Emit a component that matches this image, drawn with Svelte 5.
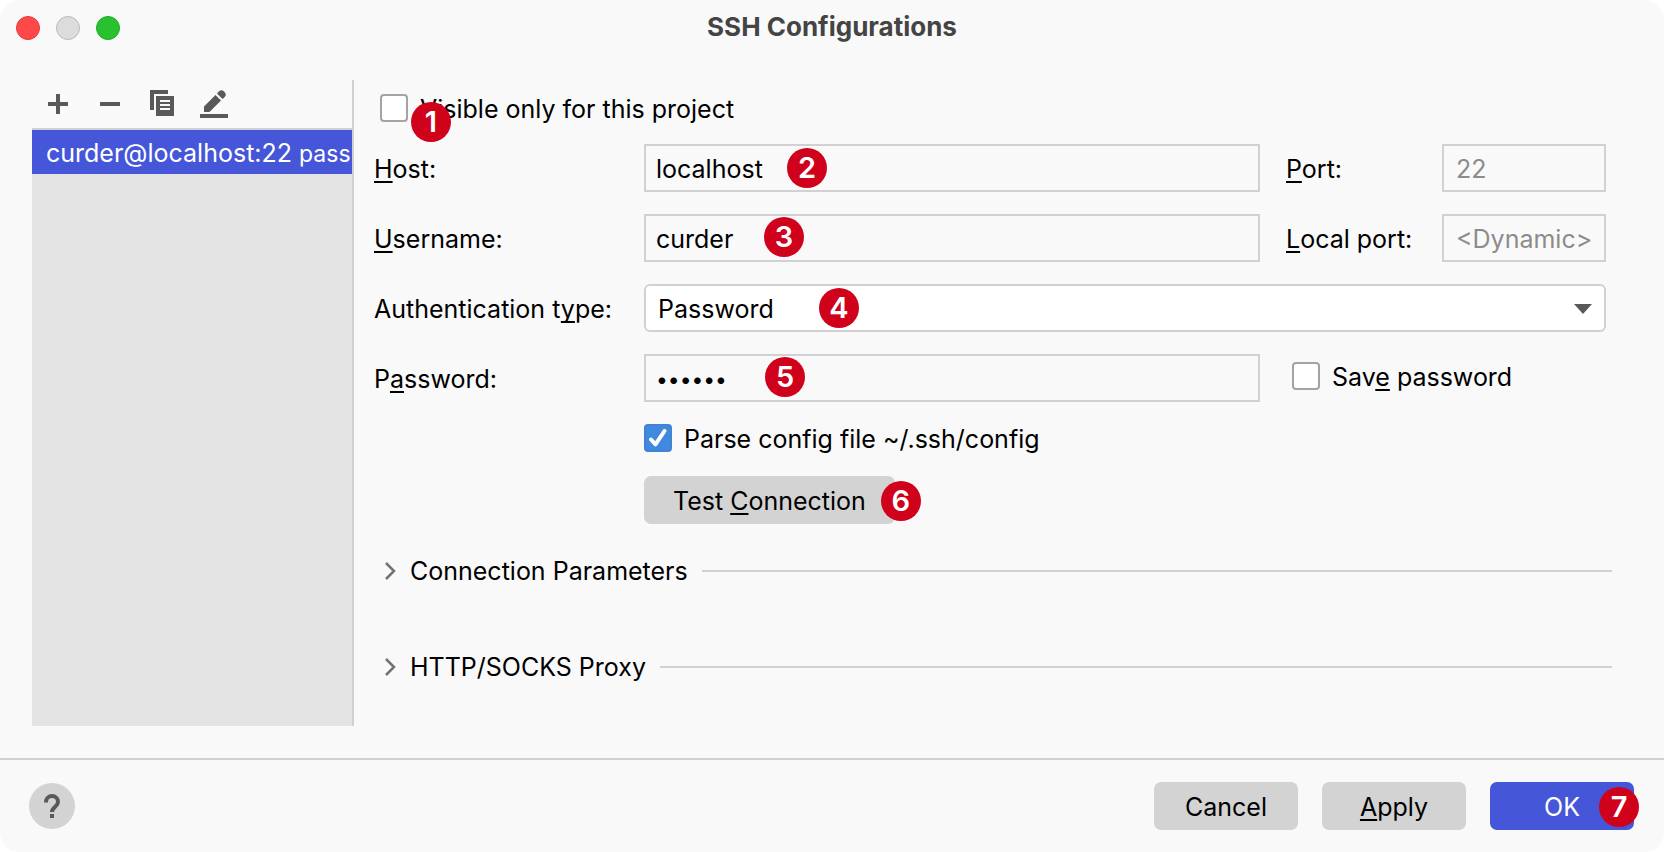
<script>
  let visibleOnly = $state(false);
  let savePassword = $state(false);
  let parseConfig = $state(true);
  let host = $state('localhost');
  let username = $state('curder');
  let password = $state('secret');
  let auth = $state('Password');
</script>

<main class="window">
  <header class="titlebar">
    <div class="lights">
      <button class="light red" aria-label="Close"></button>
      <button class="light grey" aria-label="Minimize"></button>
      <button class="light green" aria-label="Zoom"></button>
    </div>
    <h1>SSH Configurations</h1>
  </header>

  <div class="content">
    <aside>
      <div class="toolbar">
        <button aria-label="Add">
          <svg width="28" height="28" viewBox="0 0 28 28"><path d="M12 4h4v8h8v4h-8v8h-4v-8H4v-4h8z" /></svg>
        </button>
        <button aria-label="Remove">
          <svg width="28" height="28" viewBox="0 0 28 28"><path d="M4 12h20v4H4z" /></svg>
        </button>
        <button aria-label="Copy">
          <svg width="28" height="28" viewBox="0 0 28 28">
            <path d="M2 0h18v4H6v16H2z" />
            <path fill-rule="evenodd" d="M8 6h18v20H8zM12 10v2h10v-2zM12 14v2h10v-2zM12 18v2h10v-2z" />
          </svg>
        </button>
        <button aria-label="Edit">
          <svg width="28" height="28" viewBox="0 0 28 28">
            <path d="M0 24h28v4H0z" />
            <path d="M4 16.500L15.500 5 21 10.500 9.500 22H4zM17 3.500L19 1.300Q21.500-1 23.800 1.300L24.700 2.200Q27 4.500 24.700 7L22.500 9z" />
          </svg>
        </button>
      </div>
      <ul>
        <li>curder@localhost:22 <small>pass</small></li>
      </ul>
    </aside>

    <section class="panel">
      <div class="form">
        <div class="check first">
          <input id="visible" type="checkbox" bind:checked={visibleOnly} />
          <label for="visible">Visible only for this project</label>
          <span class="badge b1">1</span>
        </div>

        <label for="host"><u>H</u>ost:</label>
        <div class="field">
          <input id="host" type="text" bind:value={host} />
          <span class="badge b2">2</span>
        </div>
        <label class="side" for="port"><u>P</u>ort:</label>
        <input id="port" class="short" type="text" placeholder="22" />

        <label for="user"><u>U</u>sername:</label>
        <div class="field">
          <input id="user" type="text" bind:value={username} />
          <span class="badge b3">3</span>
        </div>
        <label class="side" for="local"><u>L</u>ocal port:</label>
        <input id="local" class="short" type="text" placeholder="&lt;Dynamic&gt;" />

        <label for="auth">Authentication t<u>y</u>pe:</label>
        <div class="field wide">
          <select id="auth" bind:value={auth}>
            <option>Password</option>
          </select>
          <svg class="arrow" width="18" height="10" viewBox="0 0 18 10"><path d="M0 0h18L9 10z" /></svg>
          <span class="badge b4">4</span>
        </div>

        <label for="pass">P<u>a</u>ssword:</label>
        <div class="field">
          <input id="pass" type="password" bind:value={password} />
          <span class="badge b5">5</span>
        </div>
        <div class="check save">
          <input id="save" type="checkbox" bind:checked={savePassword} />
          <label for="save">Sav<u>e</u> password</label>
        </div>

        <div class="extra">
          <div class="check">
            <input id="parse" type="checkbox" bind:checked={parseConfig} />
            <label for="parse">Parse config file ~/.ssh/config</label>
          </div>
          <button class="btn test">Test <u>C</u>onnection<span class="badge b6">6</span></button>
        </div>
      </div>

      <div class="groups">
        {#each ['Connection Parameters', 'HTTP/SOCKS Proxy'] as name}
          <button class="group" aria-expanded="false">
            <svg width="12" height="20" viewBox="0 0 12 20"><path d="M2 2l8 8-8 8" /></svg>
            <span>{name}</span>
          </button>
        {/each}
      </div>
    </section>
  </div>

  <footer>
    <button class="help" aria-label="Help">
      <svg width="46" height="46" viewBox="0 0 46 46">
        <path class="hook" d="M17 19.500V19a6 6 0 0 1 12 0c0 4.500-6 5-6 10" />
        <path class="dot" d="M21 31h4v4h-4z" />
      </svg>
    </button>
    <div class="actions">
      <button class="btn">Cancel</button>
      <button class="btn"><u>A</u>pply</button>
      <button class="btn primary">OK<span class="badge b7">7</span></button>
    </div>
  </footer>
</main>

<style>
  :global(body) {
    background: #fff;
  }

  * {
    box-sizing: border-box;
  }

  .window {
    display: flex;
    flex-direction: column;
    min-height: 100vh;
    overflow: hidden;
    border-radius: 20px;
    background: #f9f9f9;
    color: #000;
    font-family: Inter, 'Liberation Sans', sans-serif;
    font-size: 25px;
    line-height: 28px;
  }

  button,
  input,
  select {
    margin: 0;
    padding: 0;
    border: 0;
    background: none;
    color: inherit;
    font: inherit;
  }

  svg {
    display: block;
  }

  u {
    text-decoration-thickness: 2px;
    text-underline-offset: 3px;
    text-decoration-skip-ink: none;
  }

  label {
    padding-top: 2px;
  }

  .titlebar {
    display: grid;
    grid-template-columns: 1fr auto 1fr;
    align-items: center;
    height: 56px;
    padding: 0 16px;
  }

  .lights {
    display: flex;
    gap: 16px;
  }

  .light {
    width: 24px;
    height: 24px;
    border: 1px solid;
    border-radius: 50%;
  }

  .red {
    border-color: #e5383b;
    background: #ff4848;
  }

  .grey {
    border-color: #b9b9b9;
    background: #dcdcdc;
  }

  .green {
    border-color: #1faa27;
    background: #28c231;
  }

  h1 {
    margin: 0;
    padding-bottom: 2px;
    color: #444;
    font-size: 26px;
    font-weight: 700;
  }

  .content {
    display: flex;
    flex: 1;
    padding: 24px 52px 32px 32px;
  }

  aside {
    display: flex;
    flex: 0 0 322px;
    flex-direction: column;
    min-width: 0;
    border-right: 2px solid #d1d1d1;
  }

  .toolbar {
    display: flex;
    gap: 24px;
    height: 50px;
    padding: 10px 12px;
    border-bottom: 2px solid #d1d1d1;
  }

  .toolbar button {
    height: 28px;
    fill: #595959;
  }

  ul {
    flex: 1;
    margin: 0;
    padding: 0;
    background: #e4e4e4;
    list-style: none;
  }

  li {
    height: 44px;
    padding: 2px 0 0 14px;
    overflow: hidden;
    background: #4556d9;
    color: #fff;
    line-height: 42px;
    white-space: nowrap;
  }

  small {
    font-size: 23px;
  }

  .panel {
    flex: 1;
    min-width: 0;
    padding: 14px 0 0 20px;
  }

  .form {
    display: grid;
    grid-template-columns: 270px 1fr 182px 164px;
    row-gap: 22px;
    align-items: center;
    margin-right: 6px;
  }

  .side {
    padding-left: 26px;
  }

  .check {
    position: relative;
    display: flex;
    gap: 12px;
    align-items: center;
    height: 32px;
    padding-bottom: 4px;
  }

  .first {
    grid-column: 1 / -1;
    margin-bottom: -4px;
    padding-left: 6px;
  }

  .save {
    grid-column: 3 / -1;
    padding-left: 32px;
  }

  input[type='checkbox'] {
    flex: none;
    width: 28px;
    height: 28px;
    border: 2px solid #a3a3a3;
    border-radius: 4px;
    background: #fff;
    appearance: none;
  }

  input[type='checkbox']:checked {
    border-color: #3f84d2;
    background: #3f89de url("data:image/svg+xml,%3Csvg xmlns='http://www.w3.org/2000/svg' viewBox='0 0 24 24'%3E%3Cpath d='M5 13.500l4.500 4.800L18.500 5' fill='none' stroke='%23fff' stroke-width='4' stroke-linecap='round' stroke-linejoin='round'/%3E%3C/svg%3E") center / 24px 24px no-repeat;
  }

  .field {
    position: relative;
  }

  .field input,
  .short,
  select {
    display: block;
    width: 100%;
    height: 48px;
    padding: 2px 10px 0;
    border: 2px solid #d1d1d1;
  }

  .field input[type='password'] {
    font-size: 21px;
  }

  .short {
    padding: 2px 12px 0;
  }

  .short::placeholder {
    color: #8c8c8c;
    opacity: 1;
  }

  .wide {
    grid-column: 2 / -1;
  }

  select {
    padding: 2px 12px 0;
    border-radius: 6px;
    background: #fff;
    appearance: none;
  }

  .arrow {
    position: absolute;
    top: 20px;
    right: 14px;
    fill: #595959;
    pointer-events: none;
  }

  .extra {
    display: flex;
    grid-column: 2 / -1;
    flex-direction: column;
    gap: 20px;
    align-items: flex-start;
  }

  .btn {
    position: relative;
    min-width: 144px;
    height: 48px;
    padding-top: 2px;
    border-radius: 7px;
    background: #d3d3d3;
  }

  .test {
    padding: 2px 29px 0;
  }

  .primary {
    background: #4556d9;
    color: #fff;
  }

  .groups {
    display: flex;
    flex-direction: column;
    gap: 68px;
    padding: 33px 0 0 10px;
  }

  .group {
    display: flex;
    gap: 14px;
    align-items: center;
    width: 100%;
  }

  .group::after {
    flex: 1;
    height: 2px;
    background: #d1d1d1;
    content: '';
  }

  .group svg {
    fill: none;
    stroke: #737373;
    stroke-width: 2.500;
  }

  footer {
    display: flex;
    align-items: center;
    justify-content: space-between;
    height: 94px;
    padding: 0 30px 0 29px;
    border-top: 2px solid #d1d1d1;
  }

  .help {
    width: 46px;
    height: 46px;
    border-radius: 50%;
    background: #d3d3d3;
  }

  .hook {
    fill: none;
    stroke: #595959;
    stroke-width: 4;
  }

  .dot {
    fill: #595959;
  }

  .actions {
    display: flex;
    gap: 24px;
  }

  .badge {
    position: absolute;
    width: 40px;
    height: 40px;
    border-radius: 50%;
    background: #d0021b;
    color: #fff;
    font-size: 29px;
    font-weight: 600;
    line-height: 40px;
    text-align: center;
    pointer-events: none;
  }

  .b1 {
    top: 8px;
    left: 37px;
  }

  .b2 {
    top: 4px;
    left: 143px;
  }

  .b3 {
    top: 3px;
    left: 120px;
  }

  .b4 {
    top: 4px;
    left: 175px;
  }

  .b5 {
    top: 3px;
    left: 121px;
  }

  .b6 {
    top: 5px;
    right: -26px;
  }

  .b7 {
    top: 5px;
    right: -5px;
  }
</style>
